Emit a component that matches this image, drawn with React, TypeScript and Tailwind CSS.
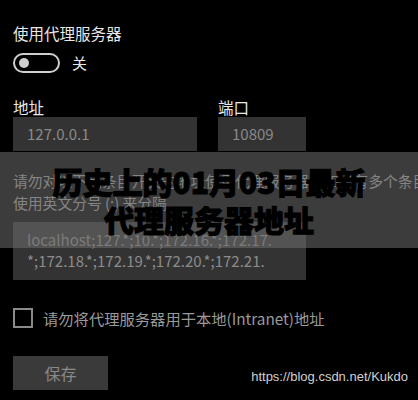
export default function App() {
  const font = { fontFamily: '"Noto Sans CJK SC", "Noto Sans", sans-serif' };

  return (
    <div
      className="relative w-[418px] h-[400px] overflow-hidden bg-black"
      style={font}
    >
      <div className="pl-[13px] pt-[23px]">
        {/* 标题 */}
        <div className="text-[15.5px] leading-[20px] text-[#e8e8e8]">使用代理服务器</div>

        {/* 开关 */}
        <div className="mt-[10px] flex h-[20px] items-center gap-[12px]">
          <div className="flex h-[20px] w-[47px] items-center rounded-full border-2 border-[#cfcfcf] pl-[4px]">
            <div className="h-[10px] w-[10px] rounded-full bg-[#cfcfcf]" />
          </div>
          <span className="text-[15px] leading-[20px] text-[#e8e8e8]">关</span>
        </div>

        {/* 地址 / 端口 */}
        <div className="mt-[24px] flex gap-[21px]">
          <div className="flex w-[184px] flex-col">
            <span className="text-[15.5px] leading-[20px] text-[#e8e8e8]">地址</span>
            <div className="flex h-[34px] items-center bg-[#333333] pl-[14px] text-[15px] text-[#8a8a8a]">
              127.0.0.1
            </div>
          </div>
          <div className="flex w-[88px] flex-col">
            <span className="text-[15.5px] leading-[20px] text-[#e8e8e8]">端口</span>
            <div className="flex h-[34px] items-center bg-[#333333] pl-[14px] text-[15px] text-[#8a8a8a]">
              10809
            </div>
          </div>
        </div>

        {/* 说明 */}
        <div className="mt-[19px] text-[14.8px] leading-[22px] text-[#a0a0a0]">
          <div className="whitespace-nowrap">请勿对以下列条目开头的地址使用代理服务器。如果有多个条目，请</div>
          <div className="whitespace-nowrap">使用英文分号 (;) 来分隔</div>
        </div>

        {/* 例外列表 */}
        <div className="mt-[8px] h-[58px] w-[293px] bg-[#333333] pl-[14px] pt-[7px] text-[15px] leading-[21px] text-[#8c8c8c]">
          <div className="whitespace-nowrap">localhost;127.*;10.*;172.16.*;172.17.</div>
          <div className="whitespace-nowrap">*;172.18.*;172.19.*;172.20.*;172.21.</div>
        </div>

        {/* 复选框 */}
        <div className="mt-[28px] flex h-[20px] items-center gap-[10px]">
          <div className="h-[20px] w-[20px] border-2 border-[#8a8a8a]" />
          <span className="text-[15.3px] leading-[20px] text-[#9a9a9a]">
            请勿将代理服务器用于本地(Intranet)地址
          </span>
        </div>

        {/* 保存 */}
        <div className="mt-[28px] flex items-end justify-between pr-[10px]">
          <div className="flex h-[34px] w-[95px] items-center justify-center bg-[#3a3a3a] text-[16px] text-[#8a8a8a]">
            保存
          </div>
          <span
            className="mb-[4px] text-[13px] text-[#d0d0d0]"
            style={{ fontFamily: '"Liberation Sans", Arial, sans-serif' }}
          >
            https://blog.csdn.net/Kukdo
          </span>
        </div>
      </div>

      {/* 标题横幅 */}
      <div className="absolute left-0 top-[152px] flex h-[96px] w-full flex-col items-center justify-center bg-[rgba(110,110,110,0.55)]">
        <div className="text-[30px] font-black leading-[38px] text-black [-webkit-text-stroke:1px_black]">
          历史上的01月03日最新
        </div>
        <div className="text-[30px] font-black leading-[38px] text-black [-webkit-text-stroke:1px_black]">
          代理服务器地址
        </div>
      </div>
    </div>
  );
}
